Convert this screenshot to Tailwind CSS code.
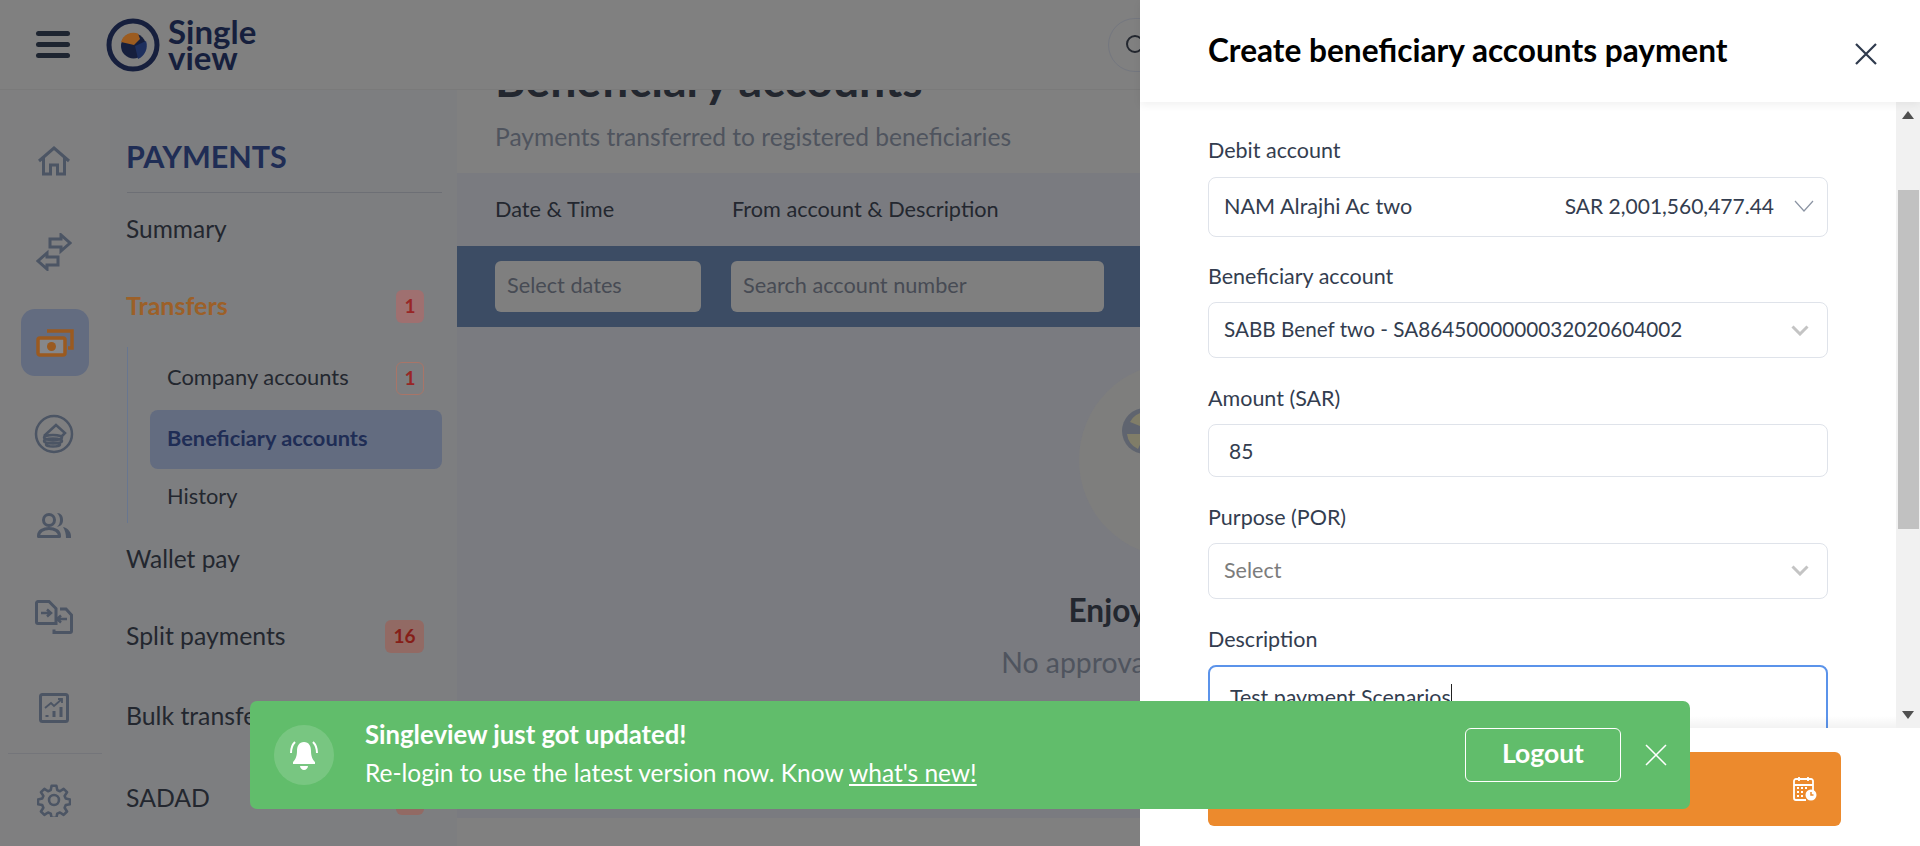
<!DOCTYPE html>
<html lang="en">
<head>
<meta charset="utf-8">
<title>Singleview</title>
<script src="https://cdn.jsdelivr.net/npm/@tailwindcss/browser@4"></script>
</head>
<body class="font-['Lato','Noto_Sans',sans-serif]">
<div class="relative w-[1920px] h-[846px] overflow-hidden bg-[#808080] text-[#23272f]">

  <!-- top bar -->
  <header class="relative z-10 h-[90px] flex items-center bg-[#808080] border-b border-[#7a7a7a] pl-[36px]">
    <button class="w-[34px] flex flex-col gap-[6.5px] mr-[33px]">
      <span class="h-[4.5px] rounded-full bg-[#1e2531]"></span>
      <span class="h-[4.5px] rounded-full bg-[#1e2531]"></span>
      <span class="h-[4.5px] rounded-full bg-[#1e2531]"></span>
    </button>
    <svg class="w-[60px] h-[60px] shrink-0" viewBox="0 0 60 60">
      <circle cx="30" cy="30" r="24" fill="none" stroke="#161f3d" stroke-width="5"/>
      <circle cx="30.500" cy="31" r="12.500" fill="#161f3d"/>
      <path d="M18 27 A13 13 0 0 1 35 18.500 L37 24 L31 30 Z" fill="#9c5c20"/>
      <path d="M32 31 L43 26 A14.500 14.500 0 0 1 35 44 Z" fill="#1d2f5e"/>
    </svg>
    <div class="ml-[5px] text-[33px] leading-[26px] font-bold text-[#161f3d] -mt-[2px]">Single<br>view</div>
    <div class="absolute left-[1108px] top-[18px] w-[200px] h-[54px] rounded-full border border-[#74777f] flex items-center pl-[16px]">
      <svg class="w-[22px] h-[22px]" viewBox="0 0 22 22" fill="none" stroke="#23272f" stroke-width="2"><circle cx="10" cy="10" r="8"/><path d="M15 15l5 5"/></svg>
    </div>
  </header>

  <div class="flex h-[756px]">
    <!-- icon rail -->
    <nav class="w-[110px] shrink-0 pt-[25px] pr-[2px] flex flex-col items-center bg-[#7f7f80]">
      <div class="h-[91.5px] w-full flex items-center justify-center">
        <svg class="w-[34px] h-[30px]" viewBox="0 0 34 30" fill="none" stroke="#4c5564" stroke-width="3"><path d="M2 15 17 2l15 13M6.500 12v16h7v-9h7v9h7V12"/></svg>
      </div>
      <div class="h-[91.5px] w-full flex items-center justify-center">
        <svg class="w-[36px] h-[38px]" viewBox="0 0 36 38" fill="none" stroke="#4c5564" stroke-width="3"><path d="M14 6h11V2l9 8-9 8v-4H14z"/><path d="M22 24H11v-4l-9 8 9 8v-4h11z"/></svg>
      </div>
      <div class="h-[91.5px] w-full flex items-center justify-center">
        <div class="w-[68px] h-[67px] translate-x-[1px] rounded-[14px] bg-[#636c80] flex items-center justify-center">
          <svg class="w-[38px] h-[28px]" viewBox="0 0 38 28" fill="none" stroke="#9a5a20" stroke-width="3.500"><path d="M11 2h25v17h-4"/><rect x="2" y="9" width="27" height="17" rx="2" fill="#85878b"/><circle cx="15.500" cy="17.500" r="4.500" fill="#9a5a20" stroke="none"/></svg>
        </div>
      </div>
      <div class="h-[91.5px] w-full flex items-center justify-center">
        <svg class="w-[40px] h-[40px]" viewBox="0 0 40 40" fill="none" stroke="#4c5564" stroke-width="2.500"><circle cx="20" cy="20" r="18"/><path d="M10 22 22 11l9 8-4 4"/><ellipse cx="19" cy="23.500" rx="9" ry="2.500"/><ellipse cx="19" cy="27" rx="9" ry="2.500"/><ellipse cx="19" cy="30.500" rx="7" ry="2"/></svg>
      </div>
      <div class="h-[91.5px] w-full flex items-center justify-center">
        <svg class="w-[34px] h-[26px]" viewBox="0 0 34 26" fill="#4c5564"><circle cx="12" cy="8" r="5.500" fill="none" stroke="#4c5564" stroke-width="3"/><path d="M1.500 24c0-5 5-7.500 10.500-7.500S22.500 19 22.500 24v.5h-21z" fill="none" stroke="#4c5564" stroke-width="3" stroke-linejoin="round"/><path d="M20 1c4 0 6 3 6 7s-2 6-6 7c2-2 3-4 3-7s-1-5-3-7zM26 15c5 1 8 5 8 9v2h-5c0-4-1-8-3-11z"/></svg>
      </div>
      <div class="h-[91.5px] w-full flex items-center justify-center">
        <svg class="w-[38px] h-[34px]" viewBox="0 0 38 34" fill="none" stroke="#4c5564" stroke-width="3"><path d="M3 1.500h11l7 7v15H3a1.500 1.500 0 0 1-1.500-1.500V3A1.500 1.500 0 0 1 3 1.500z"/><path d="M25 9l6 0 5.500 6v16a1.500 1.500 0 0 1-1.500 1.500H19v-3"/><path d="M6 13h9M12 9.500l4 3.500-4 3.500M32 19h-9M26 15.500 22 19l4 3.500" stroke-width="2.500"/></svg>
      </div>
      <div class="h-[91.5px] w-full flex items-center justify-center">
        <svg class="w-[30px] h-[30px]" viewBox="0 0 30 30" fill="none" stroke="#4c5564" stroke-width="3"><rect x="1.500" y="1.500" width="27" height="27" rx="2"/><path d="M6 15l6-5 3 3 8-7M19 6h4v4" stroke-width="1.800"/><path d="M8 22v2M15 18v6M22 14v10" stroke-width="3"/></svg>
      </div>
      <div class="w-[94px] h-px bg-[#74757a] translate-x-[1px]"></div>
      <div class="h-[92px] w-full flex items-center justify-center">
        <svg class="w-[34px] h-[34px]" viewBox="0 0 24 24" fill="none" stroke="#4c5564" stroke-width="1.800" stroke-linejoin="round"><circle cx="12" cy="12" r="3.500"/><path d="M10.300 2h3.400l.6 3 1.900.8 2.600-1.700 2.400 2.400-1.700 2.600.8 1.900 3 .6v3.400l-3 .6-.8 1.900 1.700 2.600-2.400 2.400-2.600-1.700-1.900.8-.6 3h-3.400l-.6-3-1.900-.8-2.600 1.700-2.400-2.400 1.700-2.600-.8-1.900-3-.6v-3.400l3-.6.8-1.900-1.700-2.600 2.400-2.400 2.600 1.700 1.900-.8z"/></svg>
      </div>
    </nav>

    <!-- section menu -->
    <aside class="w-[347px] shrink-0 bg-[#7d7e80] pl-[17px] pr-[15px]">
      <div class="h-[103px] border-b border-[#6d6f75] flex items-end pb-[19px]">
        <h2 class="-ml-[1px] text-[30.5px] leading-[34px] font-bold text-[#1f2d55]">PAYMENTS</h2>
      </div>
      <div class="h-[72px] flex items-center text-[24.5px] -ml-[1px]">Summary</div>
      <div class="h-[82px] flex items-center justify-between pr-[18px]">
        <span class="-ml-[1px] text-[25px] font-bold text-[#9c6028]">Transfers</span>
        <span class="w-[28px] h-[33px] rounded-[6px] bg-[#9f7070] text-[#982626] font-bold text-[19px] flex items-center justify-center">1</span>
      </div>
      <div class="h-[176px] border-l border-[#68768f] pl-[22px]">
        <div class="h-[63px] flex items-center justify-between pl-[17px] pr-[18px] text-[21.9px]">
          <span class="pb-[3px]">Company accounts</span>
          <span class="w-[28px] h-[33px] rounded-[6px] border border-[#a87568] text-[#982626] font-bold text-[19px] flex items-center justify-center">1</span>
        </div>
        <div class="h-[59px] rounded-[8px] bg-[#636c80] flex items-center pl-[17px] pb-[3px] text-[21.8px] font-bold text-[#1f2d55]">Beneficiary accounts</div>
        <div class="h-[54px] flex items-center pl-[17px] text-[21.8px]">History</div>
      </div>
      <div class="h-[72px] flex items-center text-[24.5px] -ml-[1px]">Wallet pay</div>
      <div class="h-[82px] flex items-center justify-between pr-[18px]">
        <span class="-ml-[1px] text-[24.8px]">Split payments</span>
        <span class="w-[39px] h-[33px] rounded-[6px] bg-[#926a64] text-[#861e18] font-bold text-[19px] flex items-center justify-center">16</span>
      </div>
      <div class="h-[78px] flex items-center text-[24.8px] -ml-[1px]">Bulk transfers</div>
      <div class="h-[86px] flex items-center justify-between pr-[18px]">
        <span class="-ml-[1px] text-[24.8px]">SADAD</span>
        <span class="w-[28px] h-[33px] rounded-[6px] bg-[#926a64] text-[#861e18] font-bold text-[19px] flex items-center justify-center">2</span>
      </div>
    </aside>

    <!-- page content -->
    <main class="flex-1 min-w-0 flex flex-col">
      <div class="h-[83px] pl-[38px] relative">
        <h1 class="absolute left-[38px] -top-[36px] text-[46.5px] leading-[50px] font-bold whitespace-nowrap">Beneficiary accounts</h1>
        <p class="absolute left-[38px] top-[31px] text-[24.6px] leading-[32px] text-[#4f545e]">Payments transferred to registered beneficiaries</p>
      </div>
      <div class="h-[73px] bg-[#7a7b80] flex items-center pl-[38px] text-[21.7px]">
        <span class="w-[237px]">Date &amp; Time</span>
        <span>From account &amp; Description</span>
      </div>
      <div class="h-[81px] bg-[#3c4c64] flex items-center pl-[38px] gap-[30px]">
        <div class="w-[206px] h-[51px] rounded-[6px] bg-[#7f7f7f] flex items-center pl-[12px] pb-[3px] text-[21.7px] text-[#474b54]">Select dates</div>
        <div class="w-[373px] h-[51px] rounded-[6px] bg-[#7f7f7f] flex items-center pl-[12px] pb-[3px] text-[21.7px] text-[#474b54]">Search account number</div>
      </div>
      <div class="h-[491px] bg-[#7a7b80] flex flex-col items-center pr-[26px]">
        <div class="mt-[36px] w-[194px] h-[194px] rounded-full bg-[#7e7e7d] flex items-center justify-center">
          <svg class="w-[46px] h-[46px] -translate-x-[31px] -translate-y-[29px]" viewBox="0 0 46 46"><circle cx="23" cy="23" r="23" fill="#5f646f"/><path d="M23 4 A19 19 0 0 0 8 14 L23 20Z M5 26 A19 19 0 0 0 16 41 L23 26Z M23 4 A19 19 0 0 1 38 14 L23 20Z" fill="#807d68"/></svg>
        </div>
        <p class="mt-[35px] text-[31.6px] leading-[36px] font-bold">Enjoy your day!</p>
        <p class="mt-[16px] text-[28.4px] leading-[36px] text-[#4f545e]">No approvals pending today</p>
      </div>
    </main>
  </div>

  <!-- drawer -->
  <section class="absolute right-0 top-0 z-20 w-[780px] h-[846px] bg-white flex flex-col">
    <div class="h-[102px] shrink-0 relative z-10 flex items-center justify-between pl-[68px] pr-[42px] shadow-[0_3px_8px_rgba(0,0,0,0.06)]">
      <h2 class="text-[31.6px] font-bold text-black -mt-[1px]">Create beneficiary accounts payment</h2>
      <svg class="w-[24px] h-[24px] mt-[6px]" viewBox="0 0 24 24" fill="none" stroke="#2f3a4d" stroke-width="2.200"><path d="M2 2l20 20M22 2 2 22"/></svg>
    </div>
    <div class="flex-1 relative overflow-hidden pl-[68px] pr-[92px] pt-[34px] text-[#333d4f]">
      <label class="block h-[28px] leading-[28px] text-[21.5px] mb-[13px]">Debit account</label>
      <div class="h-[60px] rounded-[8px] border border-[#dfe3ea] flex items-center pl-[15px] pr-[13px] pb-[2px]">
        <span class="text-[21.6px]">NAM Alrajhi Ac two</span>
        <span class="ml-auto text-[21px]">SAR 2,001,560,477.44</span>
        <svg class="w-[20px] h-[12px] ml-[20px]" viewBox="0 0 20 12" fill="none" stroke="#8b94a3" stroke-width="1.200"><path d="M1 1l9 10 9-10"/></svg>
      </div>
      <label class="block h-[28px] leading-[28px] text-[21.5px] mt-[25px] mb-[12px]">Beneficiary account</label>
      <div class="h-[56px] rounded-[8px] border border-[#dfe3ea] flex items-center justify-between pl-[15px] pr-[18px] text-[20.7px]">
        <span>SABB Benef two - SA8645000000032020604002</span>
        <svg class="w-[18px] h-[11px]" viewBox="0 0 18 11" fill="none" stroke="#c4c4c4" stroke-width="3"><path d="M1.500 1.500 9 9l7.500-7.500"/></svg>
      </div>
      <label class="block h-[28px] leading-[28px] text-[21.5px] mt-[26px] mb-[12px]">Amount (SAR)</label>
      <div class="h-[53px] rounded-[8px] border border-[#dfe3ea] flex items-center pl-[20px] text-[21px]">85</div>
      <label class="block h-[28px] leading-[28px] text-[21.5px] mt-[26px] mb-[12px]">Purpose (POR)</label>
      <div class="h-[56px] rounded-[8px] border border-[#dfe3ea] flex items-center justify-between pl-[15px] pr-[18px] pb-[1px] text-[21.5px] text-[#7c7c7c]">
        <span>Select</span>
        <svg class="w-[18px] h-[11px]" viewBox="0 0 18 11" fill="none" stroke="#c4c4c4" stroke-width="3"><path d="M1.500 1.500 9 9l7.500-7.500"/></svg>
      </div>
      <label class="block h-[28px] leading-[28px] text-[21.5px] mt-[26px] mb-[12px]">Description</label>
      <div class="h-[100px] rounded-[8px] border-2 border-[#5b93ea] pl-[20px] pt-[16px] text-[21.4px] leading-[28px]"><span class="border-r border-[#222]">Test payment Scenarios</span></div>

      <!-- scrollbar -->
      <div class="absolute right-0 top-0 bottom-0 w-[24px] bg-[#f1f1f1] flex flex-col items-center">
        <svg class="w-[12px] h-[8px] mt-[9px]" viewBox="0 0 12 8"><path d="M6 0l6 8H0z" fill="#505050"/></svg>
        <div class="w-[21px] h-[339px] bg-[#c1c1c1] mt-[71px]"></div>
        <svg class="w-[12px] h-[8px] mt-auto mb-[9px]" viewBox="0 0 12 8"><path d="M0 0h12L6 8z" fill="#505050"/></svg>
      </div>
      <div class="absolute left-0 right-[24px] bottom-0 h-[12px] bg-gradient-to-b from-white/0 to-black/5"></div>
    </div>
    <div class="h-[118px] shrink-0 bg-white pl-[68px] pt-[24px]">
      <div class="w-[633px] h-[74px] rounded-[6px] bg-[#ec8a2d] flex items-center justify-end pr-[23px]">
        <svg class="w-[26px] h-[26px]" viewBox="0 0 26 26" fill="none" stroke="#fff" stroke-width="1.800"><path d="M21 19V5a2 2 0 0 0-2-2H4a2 2 0 0 0-2 2v17a2 2 0 0 0 2 2h10"/><path d="M2 9h19M7 1v4M16 1v4"/><path d="M5 12h2M9 12h2M13 12h2M5 16h2M9 16h2M5 20h2M9 20h2"/><circle cx="19" cy="19" r="5.500" fill="#fff" stroke="none"/><path d="M19 16v3h2.500" stroke="#ec8a2d" stroke-width="1.500"/></svg>
      </div>
    </div>
  </section>

  <!-- update toast -->
  <div class="absolute left-[250px] top-[701px] z-30 w-[1440px] h-[108px] rounded-[7px] bg-[#61bd6b] flex items-center pl-[24px] pr-[23px] text-white">
    <div class="w-[60px] h-[60px] rounded-full bg-white/15 flex items-center justify-center">
      <svg class="w-[30px] h-[32px]" viewBox="0 0 30 32" fill="#fff"><path d="M15 3c5 0 7 4 7 9 0 6 2 9 4 11v2H4v-2c2-2 4-5 4-11 0-5 2-9 7-9z"/><path d="M11 27h8c0 2-2 4-4 4s-4-2-4-4z"/><path d="M6 3C3 6 2 9 2 14M24 3c3 3 4 6 4 11" fill="none" stroke="#fff" stroke-width="2"/></svg>
    </div>
    <div class="ml-[31px] -mt-[1px]">
      <p class="text-[25.7px] leading-[34px] font-bold -mt-[2px]">Singleview just got updated!</p>
      <p class="text-[24.5px] leading-[36px] mt-[4px]">Re-login to use the latest version now. Know <a class="underline">what's new!</a></p>
    </div>
    <button class="ml-auto w-[156px] h-[54px] pb-[2px] rounded-[6px] border border-white font-bold text-[26.5px]">Logout</button>
    <svg class="w-[22px] h-[22px] ml-[24px]" viewBox="0 0 22 22" fill="none" stroke="#fff" stroke-width="1.500"><path d="M1 1l20 20M21 1 1 21"/></svg>
  </div>
</div>
</body>
</html>
